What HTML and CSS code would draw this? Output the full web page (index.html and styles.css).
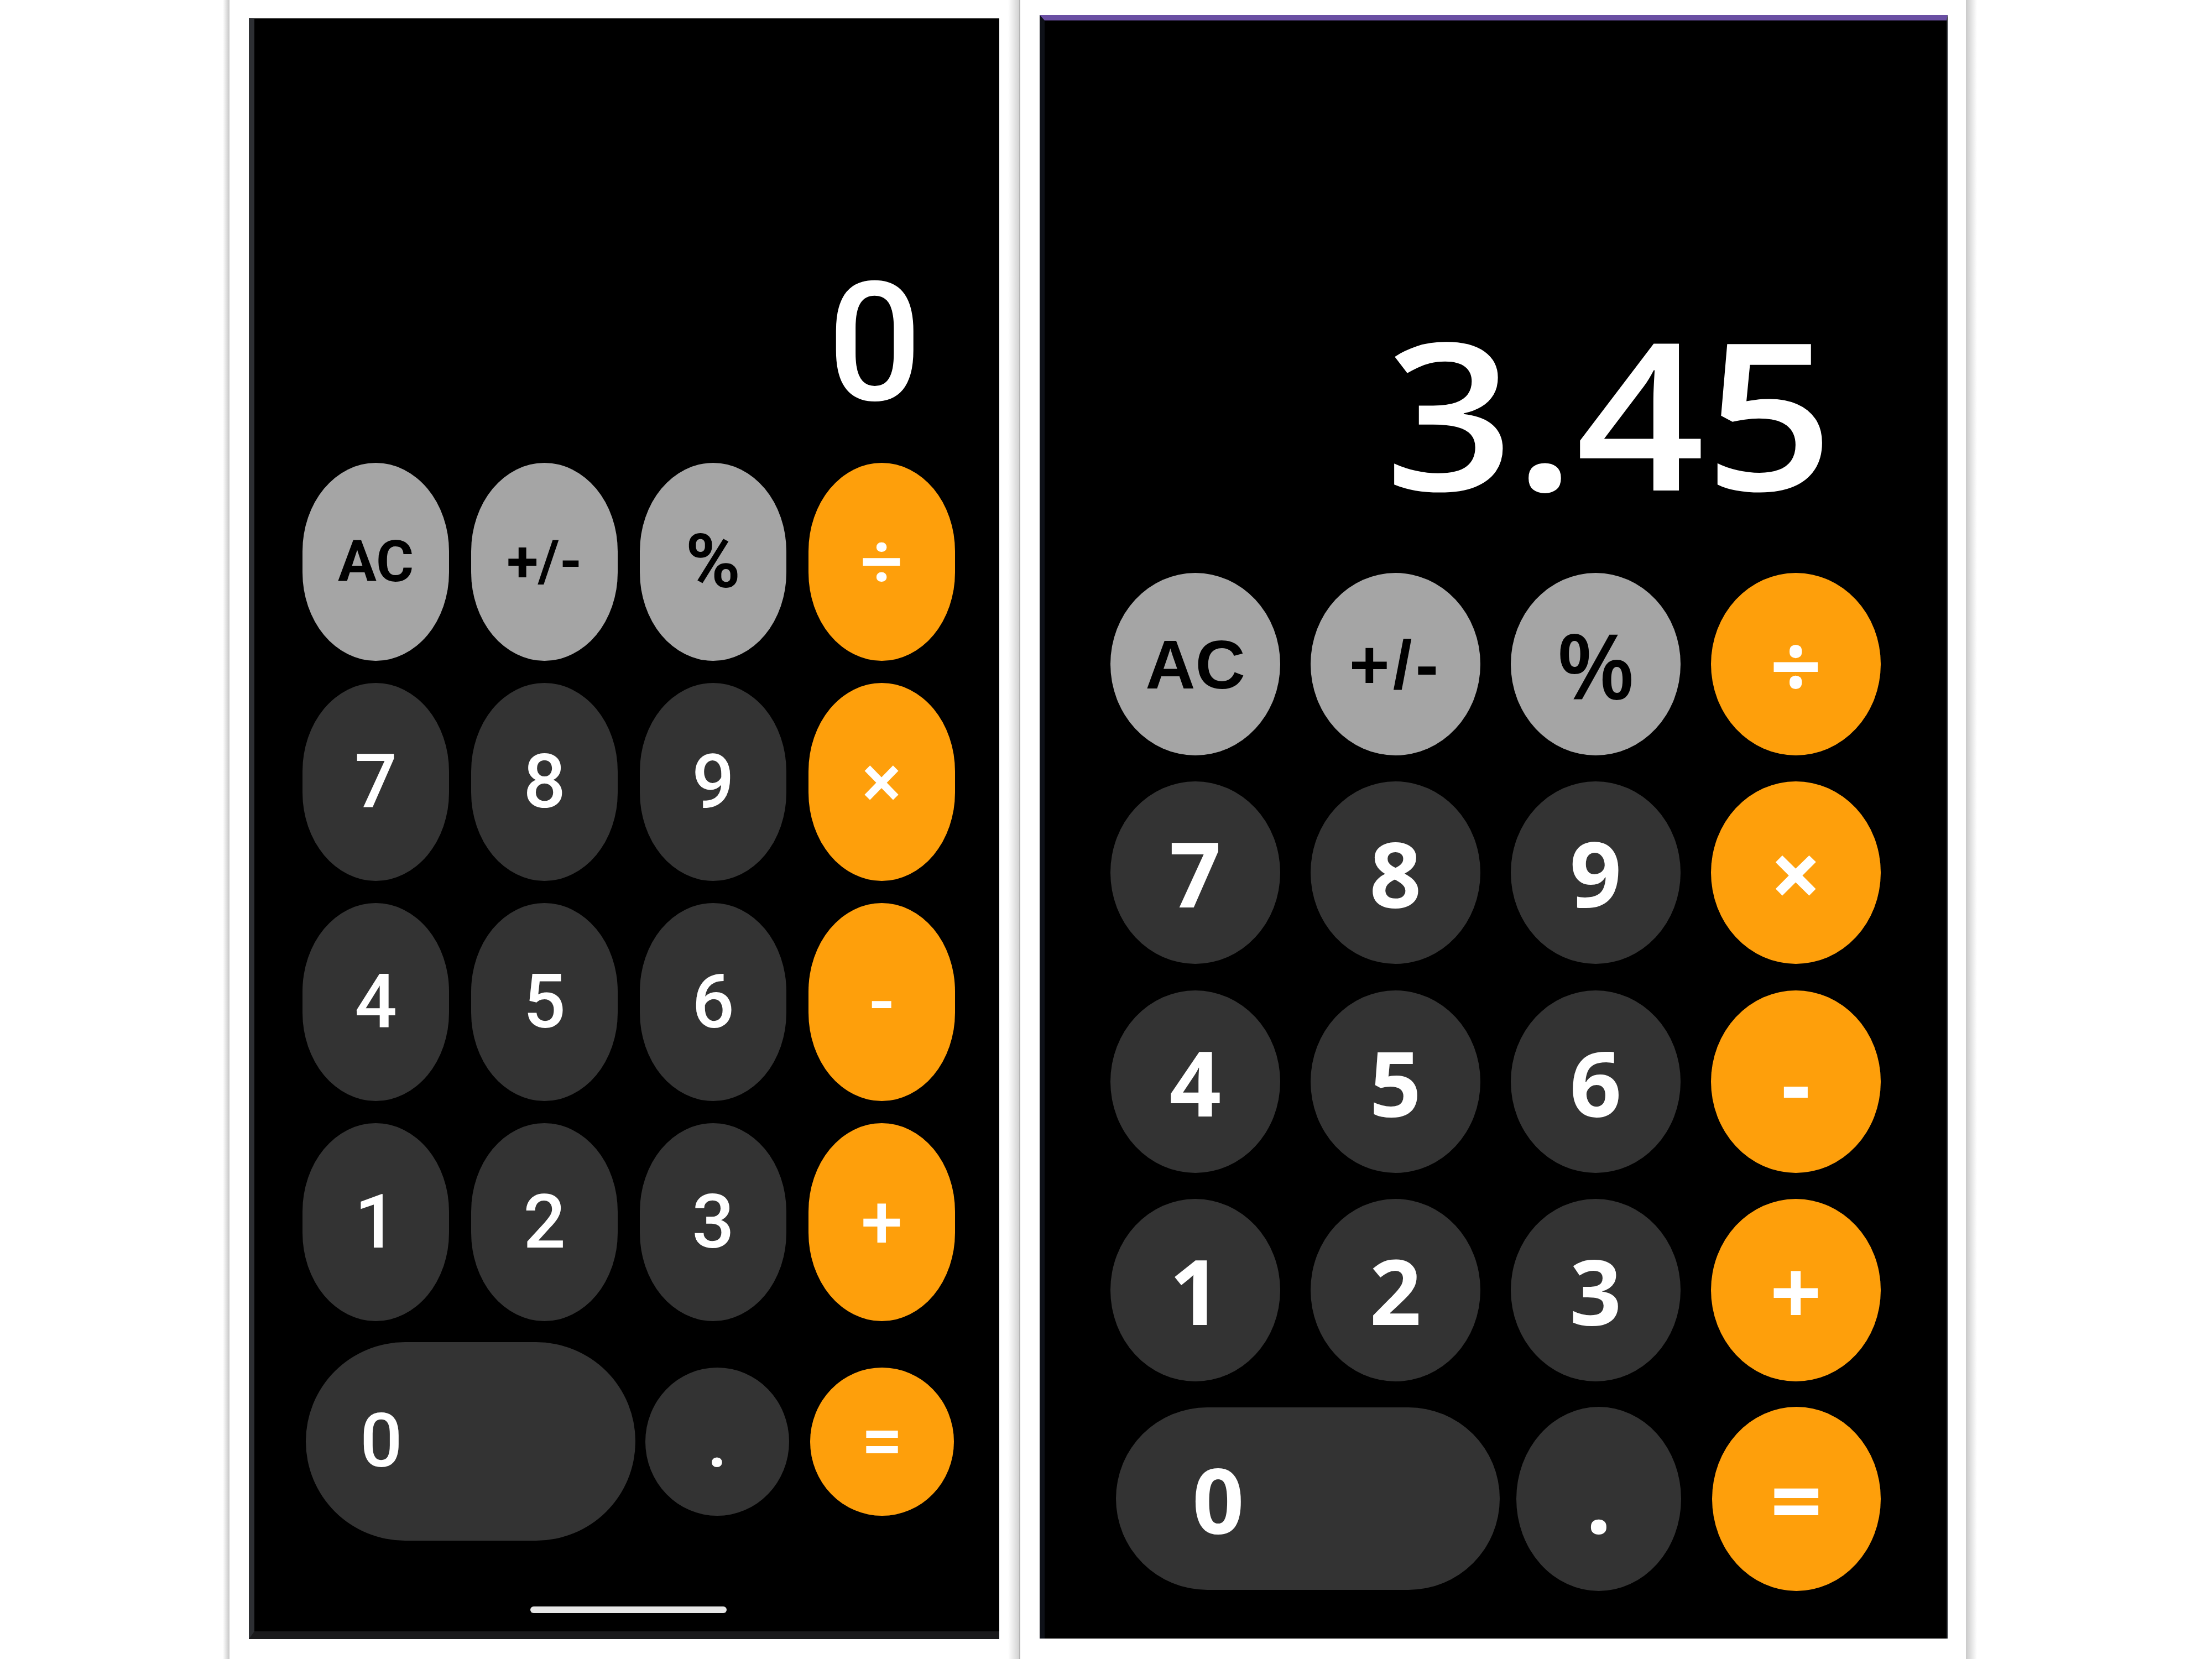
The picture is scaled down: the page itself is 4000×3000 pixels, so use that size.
FILE: index.html
```html
<!DOCTYPE html>
<html lang="en">
<head>
<meta charset="utf-8">
<title>Calculator</title>
<link rel="stylesheet" href="styles.css">
</head>
<body>
<div class="page">
  <div class="shade shade-left"></div>

  <section class="phone phone-a">
    <div class="display"><span class="display-text">0</span></div>
    <div class="keys">
      <div class="key fn"><span class="lbl-sm">AC</span></div>
      <div class="key fn"><span class="lbl-sm">+/-</span></div>
      <div class="key fn">%</div>
      <div class="key op">÷</div>
      <div class="key num">7</div>
      <div class="key num">8</div>
      <div class="key num">9</div>
      <div class="key op">×</div>
      <div class="key num">4</div>
      <div class="key num">5</div>
      <div class="key num">6</div>
      <div class="key op">-</div>
      <div class="key num">1</div>
      <div class="key num">2</div>
      <div class="key num">3</div>
      <div class="key op">+</div>
    </div>
    <div class="last-row">
      <div class="key num zero">0</div>
      <div class="key num dot">.</div>
      <div class="key op eq">=</div>
    </div>
    <div class="home-bar"></div>
  </section>

  <div class="shade shade-mid"></div>

  <section class="phone phone-b">
    <div class="display"><span class="display-text">3.45</span></div>
    <div class="keys">
      <div class="key fn"><span class="lbl-sm">AC</span></div>
      <div class="key fn"><span class="lbl-sm pm">+/-</span></div>
      <div class="key fn">%</div>
      <div class="key op">÷</div>
      <div class="key num">7</div>
      <div class="key num">8</div>
      <div class="key num">9</div>
      <div class="key op">×</div>
      <div class="key num">4</div>
      <div class="key num">5</div>
      <div class="key num">6</div>
      <div class="key op">-</div>
      <div class="key num">1</div>
      <div class="key num">2</div>
      <div class="key num">3</div>
      <div class="key op">+</div>
    </div>
    <div class="last-row">
      <div class="key num zero">0</div>
      <div class="key num dot">.</div>
      <div class="key op eq">=</div>
    </div>
  </section>

  <div class="shade shade-right"></div>
</div>
</body>
</html>
```

FILE: styles.css
```css
* { box-sizing: border-box; }

html, body {
  margin: 0;
  padding: 0;
  background: #ffffff;
}

.page {
  display: flex;
  align-items: flex-start;
  width: 4000px;
  height: 3000px;
  background: #ffffff;
}

/* card shadow edges */
.shade {
  align-self: stretch;
  flex: none;
}
.shade-left {
  margin-left: 403px;
  width: 12px;
  background: linear-gradient(to right, #ffffff, #c6c6c6);
}
.shade-mid {
  margin-left: 16px;
  width: 22px;
  background: linear-gradient(to right, #ffffff, #d2d2d2);
  border-right: 2px solid #b4b4b4;
}
.shade-right {
  margin-left: 33px;
  width: 20px;
  background: linear-gradient(to right, #c9c9c9, #ffffff);
}

/* phones */
.phone {
  flex: none;
  background: #000000;
  display: flex;
  flex-direction: column;
}

.key {
  display: flex;
  align-items: center;
  justify-content: center;
  line-height: 1;
  color: #ffffff;
}
.key.fn { background: #a5a5a5; color: #000000; }
.key.num { background: #333333; }
.key.op { background: #fe9f0b; }

.display {
  text-align: right;
  color: #ffffff;
  line-height: 1;
}
.display-text { display: inline-block; }

.last-row {
  display: flex;
  align-items: center;
}

/* ---------- left phone ---------- */
.phone-a {
  margin-left: 35px;
  margin-top: 33px;
  width: 1357px;
  border-left: 10px solid #2d2f33;
  border-top: 1px solid #3a3a3a;
  border-bottom: 14px solid #1a1a1c;
  font-family: "Roboto", "Liberation Sans", sans-serif;
  font-weight: 500;
}
.phone-a .display {
  padding-top: 437px;
  padding-right: 140px;
  font-size: 300px;
  font-weight: 500;
  height: 737px;
}
.phone-a .keys {
  margin-top: 66px;
  padding-left: 87px;
  display: grid;
  grid-template-columns: repeat(4, 265px);
  grid-auto-rows: 358px;
  gap: 40px;
}
.phone-a .key {
  font-size: 135px;
  border-radius: 132.5px / 160px;
}
.phone-a .fn { font-weight: 700; }
.phone-a .lbl-sm { font-size: 104px; }
.phone-a .last-row {
  margin-top: 38px;
  padding-left: 93px;
  height: 359px;
}
.phone-a .zero {
  width: 596px;
  height: 359px;
  border-radius: 179.5px;
  justify-content: flex-start;
  padding-left: 98px;
}
.phone-a .dot {
  width: 260px;
  height: 268px;
  margin-left: 18px;
  border-radius: 50%;
}
.phone-a .eq {
  width: 260px;
  height: 268px;
  margin-left: 38px;
  border-radius: 50%;
}
.home-bar {
  margin-top: 119px;
  margin-left: 499px;
  margin-bottom: 33px;
  width: 355px;
  height: 12px;
  border-radius: 6px;
  background: #e6e6e6;
}

/* ---------- right phone ---------- */
.phone-b {
  margin-left: 35px;
  margin-top: 27px;
  width: 1642px;
  border-left: 9px solid #0e1118;
  border-right: 2px solid #2a2d33;
  border-top: 10px solid #6a4fa3;
  font-family: "Open Sans", "Noto Sans", sans-serif;
  font-weight: 700;
}
.phone-b .display {
  padding-top: 521px;
  padding-right: 204px;
  font-size: 371px;
  font-weight: 600;
  height: 892px;
}
.phone-b .display-text {
  transform: scaleX(1.1);
  transform-origin: right center;
}
.phone-b .keys {
  margin-top: 107px;
  padding-left: 119px;
  display: grid;
  grid-template-columns: repeat(4, 307px);
  grid-auto-rows: 330px;
  column-gap: 55px;
  row-gap: 47.3px;
}
.phone-b .key {
  font-size: 164px;
  border-radius: 50%;
}
.phone-b .fn { font-weight: 600; }
.phone-b .lbl-sm {
  font-family: "Liberation Sans", Arial, sans-serif;
  font-weight: 700;
  font-size: 125px;
}
.phone-b .pm { letter-spacing: 6px; }
.phone-b .last-row {
  margin-top: 46px;
  padding-left: 129px;
  height: 333px;
  margin-bottom: 86px;
}
.phone-b .zero {
  width: 694px;
  height: 330px;
  border-radius: 165px;
  justify-content: flex-start;
  padding-left: 138px;
}
.phone-b .dot {
  width: 298px;
  height: 333px;
  margin-left: 30px;
}
.phone-b .eq {
  width: 305px;
  height: 333px;
  margin-left: 56px;
}
```
